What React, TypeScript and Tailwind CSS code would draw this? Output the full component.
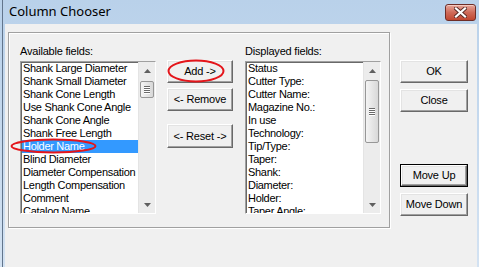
import React from "react";

const available = [
  "Shank Large Diameter",
  "Shank Small Diameter",
  "Shank Cone Length",
  "Use Shank Cone Angle",
  "Shank Cone Angle",
  "Shank Free Length",
  "Holder Name",
  "Blind Diameter",
  "Diameter Compensation",
  "Length Compensation",
  "Comment",
  "Catalog Name",
];

const displayed = [
  "Status",
  "Cutter Type:",
  "Cutter Name:",
  "Magazine No.:",
  "In use",
  "Technology:",
  "Tip/Type:",
  "Taper:",
  "Shank:",
  "Diameter:",
  "Holder:",
  "Taper Angle:",
];

function Arrow({ up }: { up?: boolean }) {
  return (
    <div className="flex h-[17px] items-center justify-center">
      <svg width="7" height="4" viewBox="0 0 7 4">
        <path d={up ? "M0 4 L3.5 0 L7 4 Z" : "M0 0 L3.5 4 L7 0 Z"} fill="#5f5f5f" />
      </svg>
    </div>
  );
}

function ScrollBar({ gap, thumb }: { gap: number; thumb: number }) {
  return (
    <div className="flex w-[17px] flex-col border-l border-[#e4e4e4] bg-[#ececec]">
      <Arrow up />
      <div style={{ height: gap }} />
      {/* thumb */}
      <div
        className="mx-[1px] flex flex-col items-center justify-center gap-[1px] rounded-[2px] border border-[#979797] bg-gradient-to-r from-[#f4f4f4] to-[#d8d8d8]"
        style={{ height: thumb }}
      >
        {[0, 1, 2, 3].map((i) => (
          <div key={i} className="h-[1px] w-[6px] bg-[#6a6a6a] shadow-[0_1px_0_#fff]" />
        ))}
      </div>
      <div className="flex-1" />
      <Arrow />
    </div>
  );
}

function ListBox({ items, selected, gap, thumb }: { items: string[]; selected?: string; gap: number; thumb: number }) {
  return (
    <div className="flex h-[153px] w-[136px] border border-t-[#a0a0a0] border-l-[#a0a0a0] border-b-white border-r-white bg-white shadow-[inset_1px_1px_0_#696969]">
      <div className="flex-1 overflow-hidden pl-[1px]">
        {items.map((it) => (
          <div
            key={it}
            className={
              "h-[13px] whitespace-nowrap pl-[1px] leading-[13px] tracking-[-0.3px] " +
              (it === selected ? "bg-[#3399ff] text-white" : "")
            }
          >
            {it}
          </div>
        ))}
      </div>
      <ScrollBar gap={gap} thumb={thumb} />
    </div>
  );
}

function Btn({ label, w, h = 23, def }: { label: string; w: number; h?: number; def?: boolean }) {
  return (
    <div className={def ? "border border-black" : ""}>
      <div
        className="flex items-center justify-center border border-t-white border-l-white border-r-[#696969] border-b-[#696969] bg-[#f0f0f0] leading-none tracking-[-0.2px] shadow-[inset_-1px_-1px_0_#a0a0a0,inset_1px_1px_0_#e3e3e3]"
        style={{ width: def ? w - 2 : w, height: def ? h - 2 : h }}
      >
        {label}
      </div>
    </div>
  );
}

export default function App() {
  return (
    <div className="relative h-[267px] w-[479px] overflow-hidden bg-gradient-to-b from-[#b9d1ea] to-[#d3e2f2] font-['Liberation_Sans',Arial,sans-serif] text-[11px] text-black">
      <div className="ml-[2px] flex h-full flex-col border-l border-[#62758c]">
        {/* Title bar */}
        <div className="flex h-[24px] items-start justify-between pl-[6px] pr-[3px]">
          <span className="mt-[3px] font-['Noto_Sans',sans-serif] text-[13px] leading-[17px] text-black">Column Chooser</span>
          <div className="mt-[4px] flex h-[17px] w-[31px] items-center justify-center rounded-[3px] border border-[#6e2d27] bg-gradient-to-b from-[#e6a59a] via-[#cf6a58] to-[#c0452f] shadow-[inset_0_1px_0_#f3c9c0]">
            <svg width="13" height="11" viewBox="0 0 13 11">
              <path d="M2 1.5 L11 9.5 M11 1.5 L2 9.5" stroke="#5a2a25" strokeWidth="4" strokeLinecap="square" />
              <path d="M2 1.5 L11 9.5 M11 1.5 L2 9.5" stroke="#ffffff" strokeWidth="2.2" strokeLinecap="square" />
            </svg>
          </div>
        </div>

        {/* Client area */}
        <div className="ml-[2px] mr-[2px] flex flex-1 items-start bg-[#f0f0f0] pl-[3px] pt-[8px]">
          {/* Group box */}
          <div className="flex h-[196px] w-[382px] items-start border border-[#a0a0a0] pl-[11px] pt-[12px] shadow-[inset_1px_1px_0_#fff,1px_1px_0_#fff]">
            <div className="flex flex-col">
              <div className="mb-[3px] h-[13px] leading-[13px] tracking-[-0.2px]">Available fields:</div>
              <ListBox items={available} selected="Holder Name" gap={2} thumb={17} />
            </div>
            <div className="ml-[11px] mt-[15px] flex flex-col">
              <Btn label="Add ->" w={66} />
              <div className="h-[5px]" />
              <Btn label="<- Remove" w={66} />
              <div className="h-[13px]" />
              <Btn label="<- Reset ->" w={66} h={24} />
            </div>
            <div className="ml-[12px] flex flex-col">
              <div className="mb-[3px] h-[13px] leading-[13px] tracking-[-0.2px]">Displayed fields:</div>
              <ListBox items={displayed} gap={1} thumb={63} />
            </div>
          </div>

          {/* Right buttons */}
          <div className="ml-[10px] mt-[28px] flex flex-col">
            <Btn label="OK" w={68} />
            <div className="h-[6px]" />
            <Btn label="Close" w={68} />
            <div className="h-[52px]" />
            <Btn label="Move Up" w={68} def />
            <div className="h-[6px]" />
            <Btn label="Move Down" w={68} />
          </div>
        </div>
      </div>

      {/* Red annotation ellipses */}
      <svg className="pointer-events-none absolute left-0 top-0" width="479" height="267">
        <ellipse cx="53.5" cy="146" rx="42" ry="6.5" fill="none" stroke="#e4151b" strokeWidth="2" />
        <ellipse cx="196" cy="71" rx="27.5" ry="10.5" fill="none" stroke="#e4151b" strokeWidth="2" />
      </svg>
    </div>
  );
}
